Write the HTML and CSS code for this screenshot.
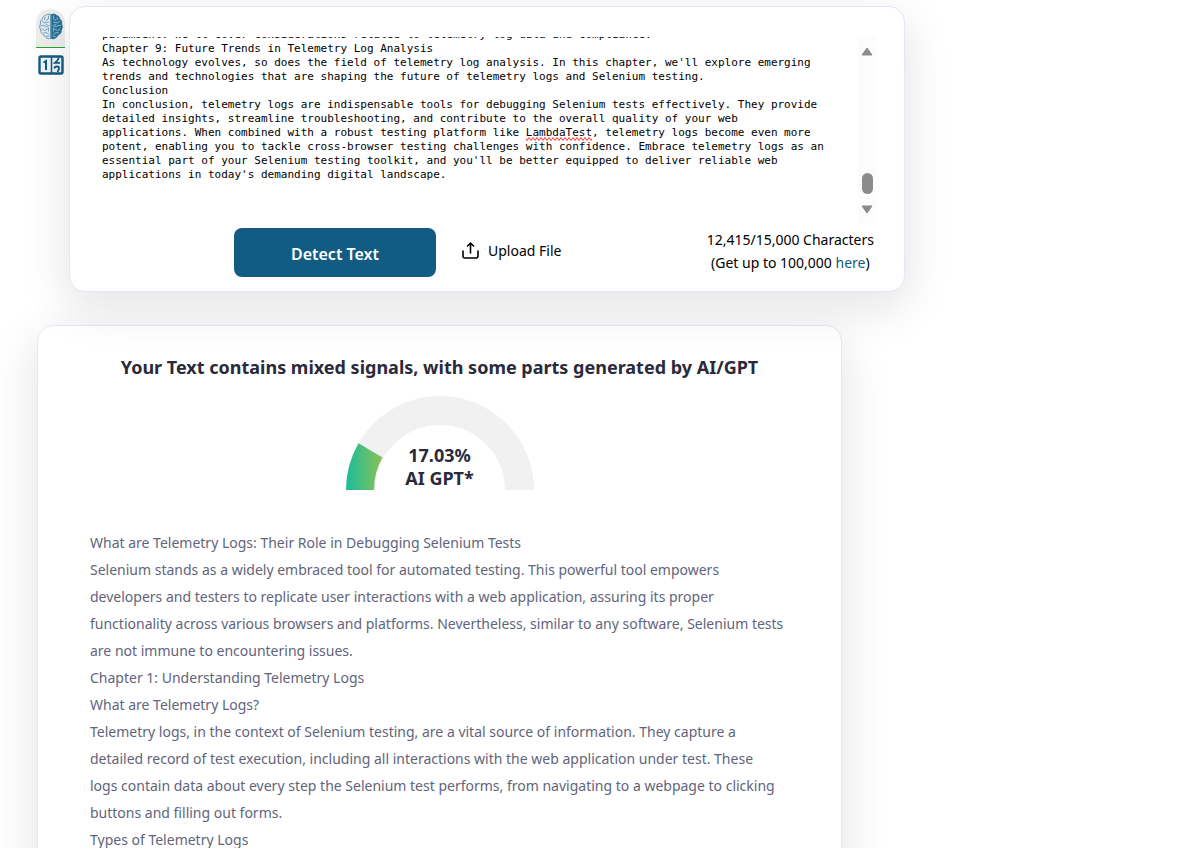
FILE: index.html
```
<!DOCTYPE html>
<html lang="en">
<head>
<meta charset="utf-8">
<title>AI Text Detector</title>
<link rel="stylesheet" href="styles.css">
</head>
<body>
<main class="page">
  <div class="detector">
    <nav class="tabs" aria-label="Detector mode">
      <button class="tab tab-active" type="button" aria-label="AI detection">
        <svg width="24" height="28" viewBox="0 0 24 28" fill="none" stroke-linecap="round" stroke-linejoin="round">
          <path d="M11.500 1.500C9 .5 7 1.500 6.500 2.500C4.500 2.800 3.500 4.500 3.500 6C1.500 7 1 9 1.500 11C.3 13 .5 15.500 1.800 17C1.500 19.500 3 21.500 5 22C6 24.500 9 26.500 11.500 25.500Z" fill="#dfe8ee" stroke="#6f9ab3"/>
          <path d="M12.500 1.500C15 .5 17 1.500 17.500 2.500C19.500 2.800 20.500 4.500 20.500 6C22.500 7 23 9 22.500 11C23.700 13 23.500 15.500 22.200 17C22.500 19.500 21 21.500 19 22C18 24.500 15 26.500 12.500 25.500Z" fill="#2a7196" stroke="#2a7196"/>
          <path d="M9.500 3V6L7 7.500M6 4.500L5.500 6.500M3.500 8.500L6 10L9.500 9M2.500 12.500H5L7 14L10 12.500M3 16L5.500 17.500L8.500 16M4.500 20L7 19.500L9.500 21M7.500 23.500L10 23M7 11.500L8.500 12M9.500 15V18" stroke="#7fa5bb"/>
          <path d="M14.500 3V6L17 7.500M18 4.500L18.500 6.500M20.500 8.500L18 10L14.500 9M21.500 12.500H19L17 14L14 12.500M21 16L18.500 17.500L15.500 16M19.500 20L17 19.500L14.500 21M16.500 23.500L14 23M17 11.500L15.500 12M14.500 15V18" stroke="#8fb6c9"/>
        </svg>
      </button>
      <button class="tab" type="button" aria-label="Counter">
        <svg width="26" height="20" viewBox="0 0 26 20" fill="none" stroke="#155b82">
          <rect x="1.500" y="1.500" width="23" height="17" rx="1.500" fill="#eef5f8" stroke-width="2.400"/>
          <path d="M13.500 2V18" stroke-width="1.500"/>
          <path d="M5.500 7.500L8 6V15" stroke-width="2"/>
          <path d="M20.500 2.500Q21 4.500 17 7.800H22M16.500 13.500Q16.500 11.500 19 11.500Q21.500 11.500 21 14L19.500 17" stroke-width="1.800"/>
        </svg>
      </button>
    </nav>

    <form class="card input-card">
      <div class="editor">
        <textarea class="editor-text" id="source" aria-label="Text to analyze">paramount. We'll cover considerations related to telemetry log data and compliance.
Chapter 9: Future Trends in Telemetry Log Analysis
As technology evolves, so does the field of telemetry log analysis. In this chapter, we'll explore emerging
trends and technologies that are shaping the future of telemetry logs and Selenium testing.
Conclusion
In conclusion, telemetry logs are indispensable tools for debugging Selenium tests effectively. They provide
detailed insights, streamline troubleshooting, and contribute to the overall quality of your web
applications. When combined with a robust testing platform like LambdaTest, telemetry logs become even more
potent, enabling you to tackle cross-browser testing challenges with confidence. Embrace telemetry logs as an
essential part of your Selenium testing toolkit, and you'll be better equipped to deliver reliable web
applications in today's demanding digital landscape.</textarea>
        <svg class="misspelling" aria-hidden="true">
          <defs>
            <pattern id="wave" width="4" height="4" patternUnits="userSpaceOnUse">
              <path d="M-1 0L1 3L3 0L5 3" transform="translate(0 .5)" fill="none" stroke="#f33"/>
            </pattern>
          </defs>
          <rect width="100%" height="4" fill="url(#wave)"/>
        </svg>
        <div class="scrollbar" aria-hidden="true">
          <svg width="12" height="9" viewBox="0 0 12 9"><path d="M6 1L11 8H1Z" fill="#8b8b8b" stroke="#8b8b8b" stroke-linejoin="round"/></svg>
          <span class="scroll-thumb"></span>
          <svg width="12" height="9" viewBox="0 0 12 9"><path d="M6 8L11 1H1Z" fill="#8b8b8b" stroke="#8b8b8b" stroke-linejoin="round"/></svg>
        </div>
      </div>
      <div class="actions">
        <button class="detect" type="button">Detect Text</button>
        <button class="upload" type="button">
          <svg width="17" height="17" viewBox="0 0 17 17" fill="none" stroke="#000" stroke-width="1.600" stroke-linecap="round" stroke-linejoin="round"><path d="M1 9V14Q1 16 3 16H14Q16 16 16 14V9M8.500 11V1.500M5.500 4L8.500 1L11.500 4"/></svg>
          Upload File
        </button>
        <p class="quota">12,415/15,000 Characters<br>(Get up to 100,000 <a href="#">here</a>)</p>
      </div>
    </form>
  </div>

  <section class="card result-card">
    <h1 class="verdict">Your Text contains mixed signals, with some parts generated by AI/GPT</h1>
    <div class="gauge">
      <svg class="gauge-arc" width="188" height="94" viewBox="0 0 188 94">
        <defs>
          <linearGradient id="level" gradientUnits="userSpaceOnUse" x1="0" y1="0" x2="188" y2="0">
            <stop offset="0" stop-color="#1abc9c"/>
            <stop offset="0.200" stop-color="#8fc252"/>
            <stop offset="0.500" stop-color="#f1c40f"/>
            <stop offset="1" stop-color="#e74c3c"/>
          </linearGradient>
        </defs>
        <path d="M0 94A94 94 0 0 1 188 94H159A65 65 0 0 0 29 94Z" fill="#f1f1f1"/>
        <path d="M0 94A94 94 0 0 1 12.500 47.200L36.500 61.500A65 65 0 0 0 28 94Z" fill="url(#level)"/>
      </svg>
      <p class="gauge-label">17.03%<br>AI GPT*</p>
    </div>
    <div class="report">
      <p>What are Telemetry Logs: Their Role in Debugging Selenium Tests</p>
      <p>Selenium stands as a widely embraced tool for automated testing. This powerful tool empowers<br>developers and testers to replicate user interactions with a web application, assuring its proper<br>functionality across various browsers and platforms. Nevertheless, similar to any software, Selenium tests<br>are not immune to encountering issues.</p>
      <p>Chapter 1: Understanding Telemetry Logs</p>
      <p>What are Telemetry Logs?</p>
      <p>Telemetry logs, in the context of Selenium testing, are a vital source of information. They capture a<br>detailed record of test execution, including all interactions with the web application under test. These<br>logs contain data about every step the Selenium test performs, from navigating to a webpage to clicking<br>buttons and filling out forms.</p>
      <p>Types of Telemetry Logs</p>
    </div>
  </section>
</main>
<script src="script.js"></script>
</body>
</html>
```
FILE: script.js
```
// Keep the editor at the end of the pasted text.
const source = document.getElementById("source");
source.scrollTop = source.scrollHeight;
```
FILE: styles.css
```
* { box-sizing: border-box; }
body {
  margin: 0;
  background: #fff;
  color: #000;
  font-family: "Noto Sans", "Open Sans", sans-serif;
  font-size: 14px;
}
p, h1 { margin: 0; }
button { border: 0; background: none; padding: 0; font: inherit; color: inherit; cursor: pointer; }
.page { max-width: 905px; padding: 6px 0 0 36px; }
.detector { position: relative; z-index: 1; display: flex; gap: 4px; align-items: flex-start; }
.card {
  background: #fff;
  border: 1px solid #e6e6f5;
  border-radius: 16px;
  box-shadow: 0 14px 48px rgba(20, 20, 43, 0.12);
}
.tabs {
  display: flex;
  flex-direction: column;
  width: 29px;
  margin-top: 3px;
  border-radius: 14px;
  overflow: hidden;
  background: #fff;
}
.tab { display: flex; justify-content: center; align-items: center; height: 36px; padding-bottom: 2px; }
.tab-active { height: 39px; background: #ededed; border-bottom: 1px solid #22a822; }
.input-card { flex: 1; min-width: 0; padding: 30px 30px 14px 32px; }
.editor {
  position: relative;
  display: flex;
  height: 186px;
  margin-right: -2px;
  font-family: "DejaVu Sans Mono", "Liberation Mono", monospace;
  font-size: 11px;
  line-height: 14px;
}
.editor-text {
  flex: 1;
  min-width: 0;
  margin: 0;
  padding: 0 0 41px;
  border: 0;
  outline: 0;
  resize: none;
  overflow: hidden;
  white-space: pre;
  background: transparent;
  color: #000;
  font: inherit;
}
.misspelling { position: absolute; left: 64ch; top: 100px; width: 10ch; height: 4px; }
.scrollbar {
  display: flex;
  flex-direction: column;
  align-items: center;
  width: 18px;
  padding: 10px 0 9px;
  background: #fcfcfc;
}
.scroll-thumb { width: 11px; height: 21px; margin: auto 0 11px; border-radius: 6px; background: #8b8b8b; }
.actions { display: flex; align-items: center; margin-top: 5px; padding-left: 132px; }
.detect {
  width: 202px;
  height: 49px;
  margin-right: 26px;
  padding-top: 3px;
  border-radius: 8px;
  background: #125b82;
  color: #fff;
  font-size: 16px;
  font-weight: 600;
}
.upload { display: flex; align-items: center; gap: 9px; margin-bottom: 4px; }
.quota { margin: 0 0 3px auto; line-height: 23px; text-align: center; }
.quota a { color: #125b82; text-decoration: none; }
.result-card { max-width: 805px; margin: 33px 0 0 1px; padding: 27px 52px 40px; }
.verdict { color: #2a2a3b; font-size: 18px; font-weight: 700; line-height: 28px; text-align: center; }
.gauge { display: grid; justify-items: center; align-items: end; margin-top: 15px; }
.gauge-arc, .gauge-label { grid-area: 1 / 1; }
.gauge-label { color: #2a2a3b; font-size: 18px; font-weight: 700; line-height: 23px; text-align: center; }
.report { margin-top: 39px; color: #62647b; line-height: 27px; }
```
